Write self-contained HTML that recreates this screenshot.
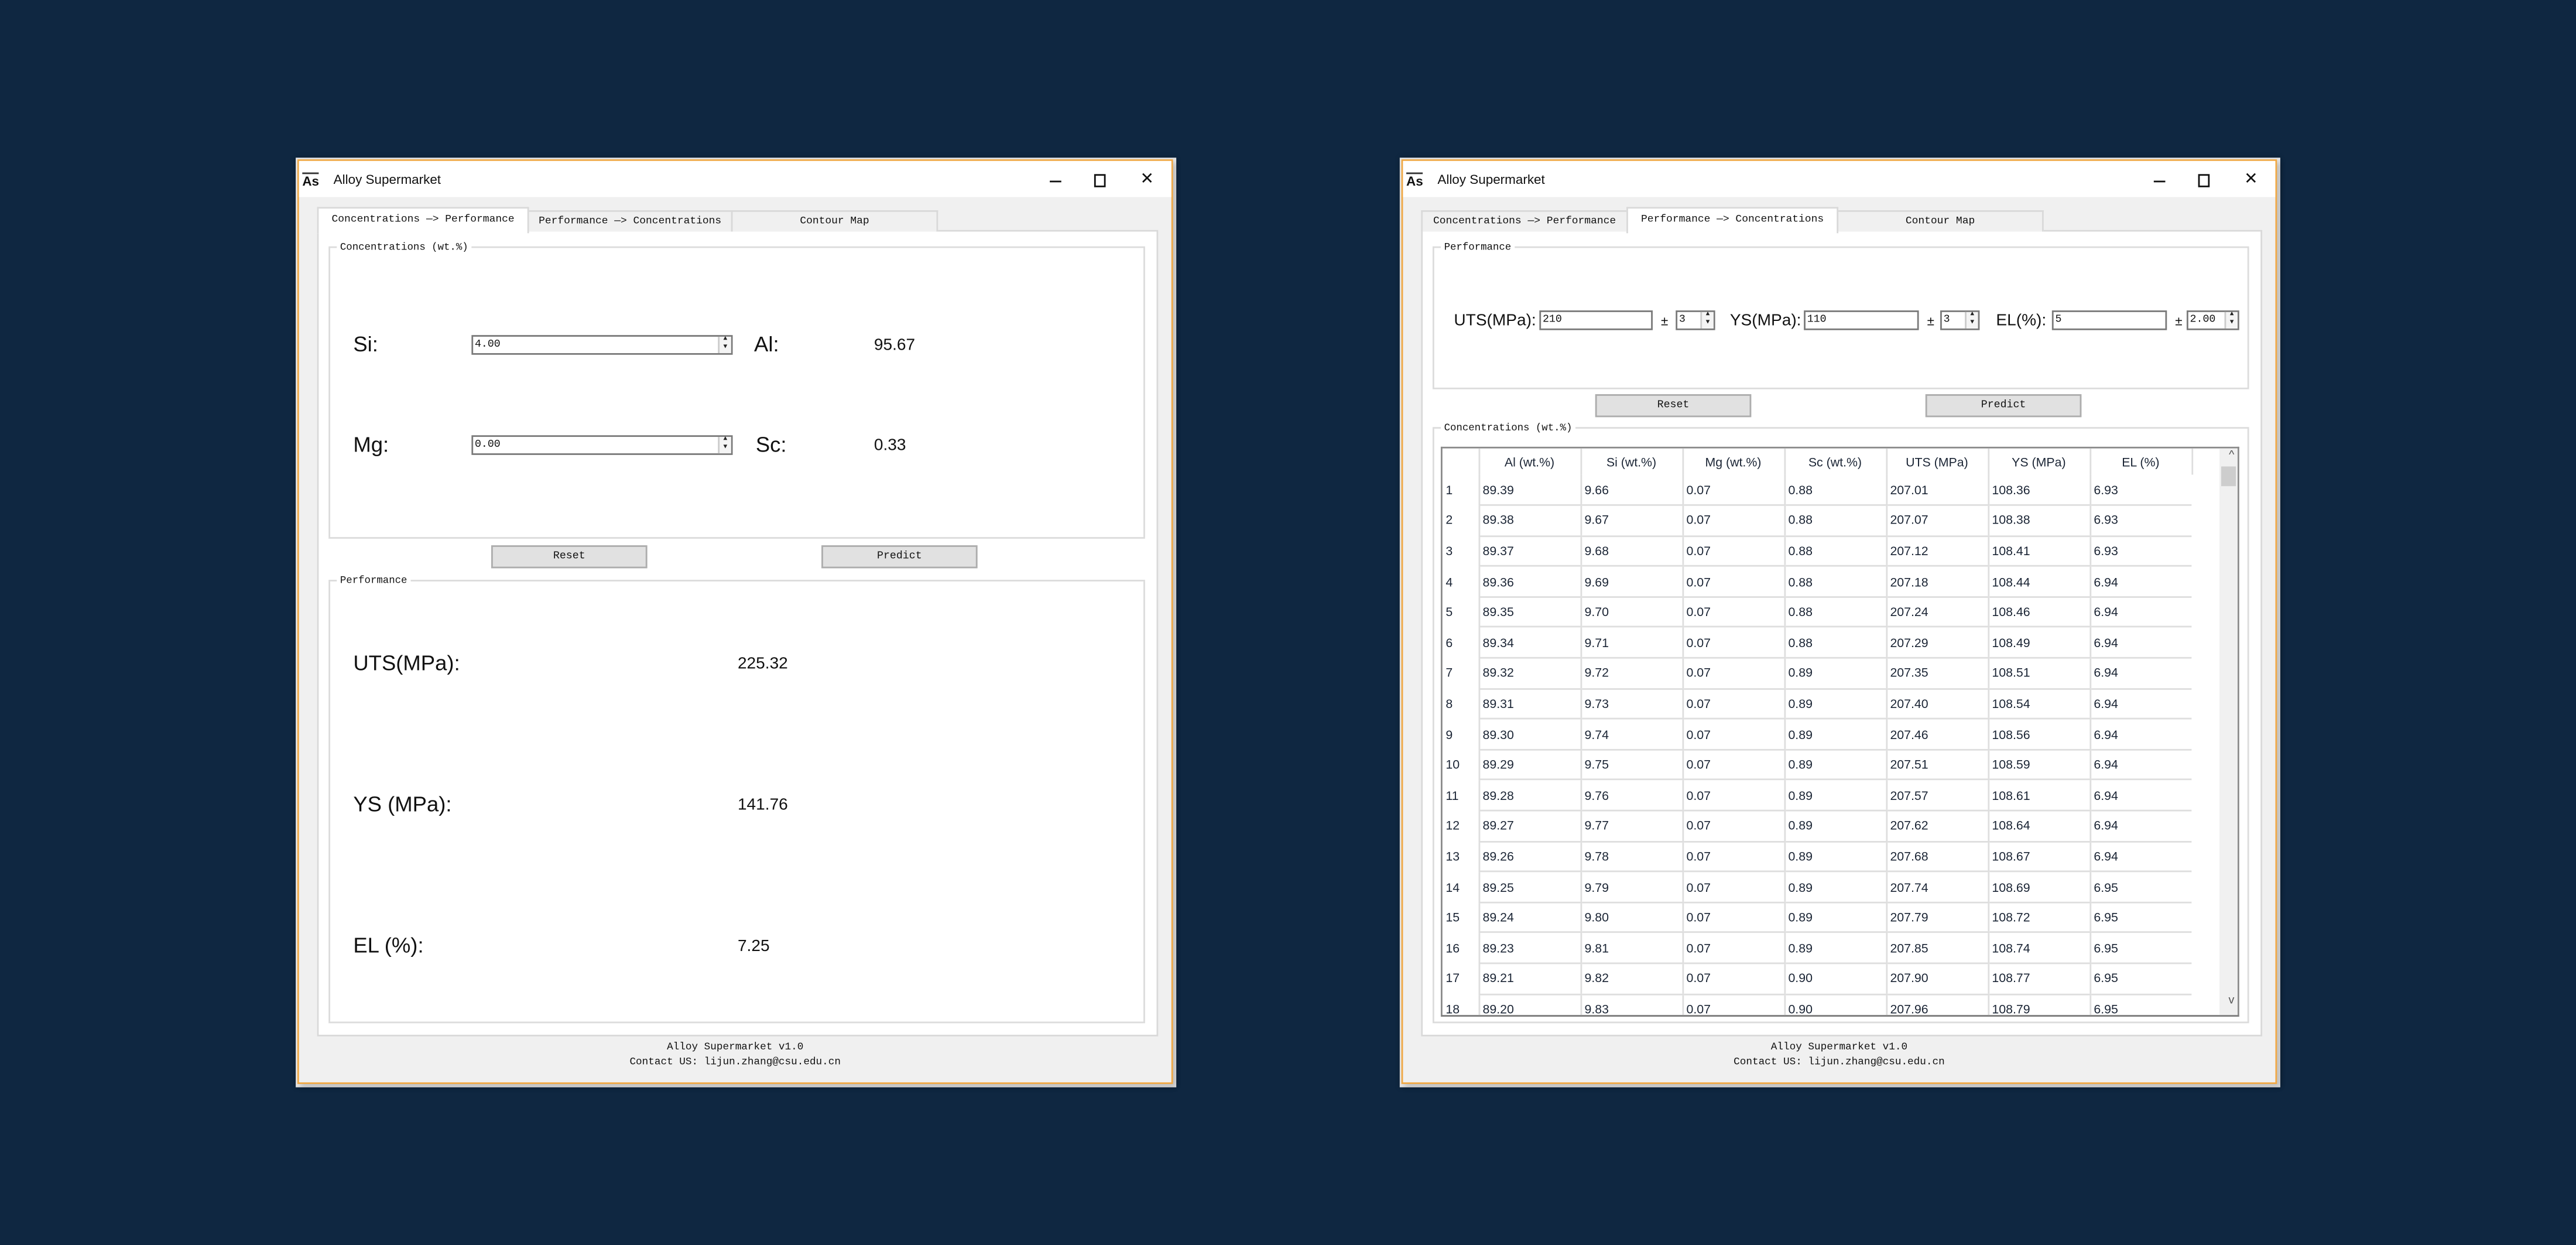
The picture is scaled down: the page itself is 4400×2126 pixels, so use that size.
<!DOCTYPE html>
<html><head><meta charset="utf-8">
<style>
*{box-sizing:border-box;margin:0;padding:0}
html,body{width:4400px;height:2126px;overflow:hidden;background:#0f2741}
#s{position:absolute;left:0;top:0;width:1568px;height:758px;transform:scale(2.80612,2.8047);transform-origin:0 0;background:#0f2741}
.a{position:absolute}
.win{position:absolute;width:536px;height:566px;background:#e4e4e4;box-shadow:0 0 3px rgba(0,0,0,.3)}
.ob{position:absolute;left:1px;top:1px;width:533px;height:563px;border:1px solid #f0a844;background:#f0f0f0;box-shadow:2px 2px 3px rgba(0,0,0,.18)}
.tb{position:absolute;left:0;top:0;width:531px;height:22px;background:#fff}
.mono{font-family:"Liberation Mono","Noto Sans CJK SC",monospace;color:#111}
.sans{font-family:"Liberation Sans",sans-serif;color:#111}
.tab{position:absolute;top:30px;height:13px;background:#f0f0f0;border:1px solid #d9d9d9;border-bottom:none;font-size:6.4px;text-align:center;line-height:12px}
.tab.on{top:28px;height:16px;background:#fff;line-height:13px;z-index:2}
.pane{position:absolute;left:11px;top:42px;width:512px;height:491px;background:#fff;border:1px solid #d9d9d9}
.grp{position:absolute;border:1px solid #dcdcdc;background:#fff}
.gt{position:absolute;top:-5px;left:4px;background:#fff;padding:0 2px;font-size:6.2px;line-height:9px}
.lbl{position:absolute;font-size:13px;line-height:14px}
.val{position:absolute;font-size:10px;line-height:12px}
.spin{position:absolute;height:12px;border:1px solid #7a7a7a;background:#fff;font-size:6.5px;line-height:10px;padding-left:1px}
.spin .ar{position:absolute;right:0;top:0;width:8px;height:10px;border-left:1px solid #ccc;background:#f4f4f4;font-size:4px;line-height:5px;text-align:center;color:#222}
.inp{position:absolute;height:12px;border:1px solid #7a7a7a;background:#fff;font-size:6.5px;line-height:10px;padding-left:1px}
.btn{position:absolute;width:95px;height:14px;background:#e1e1e1;border:1px solid #adadad;font-size:6.5px;line-height:12px;text-align:center}
.ft{position:absolute;left:0;width:531px;text-align:center;font-size:6.3px;line-height:9px}
.pm{position:absolute;font-size:8px;line-height:10px}
table{border-collapse:collapse;table-layout:fixed;font-family:"Liberation Sans",sans-serif;font-size:7.6px;color:#1b2535}
td{height:18.6px;padding-left:2px;white-space:nowrap;overflow:hidden}
td.i{width:22px;padding-left:2px}
td.d{width:62px;border-left:1px solid #dedede;border-bottom:1.5px solid #dedede;vertical-align:middle}
tr.h td{height:16px;text-align:center;border-bottom:none;padding-left:0}
</style></head><body><div id="s">

<!-- LEFT WINDOW -->
<div class="win" style="left:180px;top:96px">
 <div class="ob">
  <div class="tb">
   <div class="a sans" style="left:2px;top:7px;font-size:8px;font-weight:bold;line-height:9px;border-top:1px solid #333">As</div>
   <div class="a sans" style="left:21px;top:7px;font-size:8px;line-height:10px">Alloy Supermarket</div>
   <div class="a" style="left:457px;top:12px;width:7px;height:1px;background:#111"></div>
   <div class="a" style="left:484px;top:8px;width:7px;height:8px;border:1px solid #111"></div>
   <div class="a sans" style="left:512px;top:6px;font-size:10px;line-height:11px">✕</div>
  </div>
  <div class="pane"></div>
  <div class="tab on mono" style="left:11px;width:129px">Concentrations —&gt; Performance</div>
  <div class="tab mono" style="left:139px;width:125px">Performance —&gt; Concentrations</div>
  <div class="tab mono" style="left:263px;width:126px">Contour Map</div>

  <div class="grp" style="left:18px;top:52px;width:497px;height:178px"><div class="gt mono">Concentrations (wt.%)</div></div>
  <div class="lbl sans" style="left:33px;top:105px">Si:</div>
  <div class="spin mono" style="left:105px;top:106px;width:159px">4.00<div class="ar">▲<br>▼</div></div>
  <div class="lbl sans" style="left:277px;top:105px">Al:</div>
  <div class="val sans" style="left:350px;top:107px">95.67</div>
  <div class="lbl sans" style="left:33px;top:166px">Mg:</div>
  <div class="spin mono" style="left:105px;top:167px;width:159px">0.00<div class="ar">▲<br>▼</div></div>
  <div class="lbl sans" style="left:278px;top:166px">Sc:</div>
  <div class="val sans" style="left:350px;top:168px">0.33</div>

  <div class="btn mono" style="left:117px;top:234px">Reset</div>
  <div class="btn mono" style="left:318px;top:234px">Predict</div>

  <div class="grp" style="left:18px;top:255px;width:497px;height:270px"><div class="gt mono">Performance</div></div>
  <div class="lbl sans" style="left:33px;top:299px">UTS(MPa):</div>
  <div class="val sans" style="left:267px;top:301px">225.32</div>
  <div class="lbl sans" style="left:33px;top:385px">YS (MPa):</div>
  <div class="val sans" style="left:267px;top:387px">141.76</div>
  <div class="lbl sans" style="left:33px;top:471px">EL (%):</div>
  <div class="val sans" style="left:267px;top:473px">7.25</div>

  <div class="ft mono" style="top:535px">Alloy Supermarket v1.0</div>
  <div class="ft mono" style="top:544px">Contact US: lijun.zhang@csu.edu.cn</div>
 </div>
</div>

<!-- RIGHT WINDOW -->
<div class="win" style="left:852px;top:96px">
 <div class="ob">
  <div class="tb">
   <div class="a sans" style="left:2px;top:7px;font-size:8px;font-weight:bold;line-height:9px;border-top:1px solid #333">As</div>
   <div class="a sans" style="left:21px;top:7px;font-size:8px;line-height:10px">Alloy Supermarket</div>
   <div class="a" style="left:457px;top:12px;width:7px;height:1px;background:#111"></div>
   <div class="a" style="left:484px;top:8px;width:7px;height:8px;border:1px solid #111"></div>
   <div class="a sans" style="left:512px;top:6px;font-size:10px;line-height:11px">✕</div>
  </div>
  <div class="pane"></div>
  <div class="tab mono" style="left:11px;width:126px">Concentrations —&gt; Performance</div>
  <div class="tab on mono" style="left:136px;width:129px">Performance —&gt; Concentrations</div>
  <div class="tab mono" style="left:264px;width:126px">Contour Map</div>

  <div class="grp" style="left:18px;top:52px;width:497px;height:87px"><div class="gt mono">Performance</div></div>
  <div class="sans a" style="left:31px;top:92px;font-size:10px;line-height:12px">UTS(MPa):</div>
  <div class="inp mono" style="left:83px;top:91px;width:69px">210</div>
  <div class="pm sans" style="left:157px;top:93px">±</div>
  <div class="spin mono" style="left:166px;top:91px;width:24px">3<div class="ar">▲<br>▼</div></div>
  <div class="sans a" style="left:199px;top:92px;font-size:10px;line-height:12px">YS(MPa):</div>
  <div class="inp mono" style="left:244px;top:91px;width:70px">110</div>
  <div class="pm sans" style="left:319px;top:93px">±</div>
  <div class="spin mono" style="left:327px;top:91px;width:24px">3<div class="ar">▲<br>▼</div></div>
  <div class="sans a" style="left:361px;top:92px;font-size:10px;line-height:12px">EL(%):</div>
  <div class="inp mono" style="left:395px;top:91px;width:70px">5</div>
  <div class="pm sans" style="left:470px;top:93px">±</div>
  <div class="spin mono" style="left:477px;top:91px;width:32px">2.00<div class="ar">▲<br>▼</div></div>

  <div class="btn mono" style="left:117px;top:142px">Reset</div>
  <div class="btn mono" style="left:318px;top:142px">Predict</div>

  <div class="grp" style="left:18px;top:162px;width:497px;height:363px"><div class="gt mono">Concentrations (wt.%)</div></div>
  <div class="a" style="left:23px;top:174px;width:486px;height:347px;border:1px solid #8a8a8a;border-bottom:1.5px solid #777;background:#fff;overflow:hidden">
   <table>
    <tr class="h"><td class="i"></td><td class="d" style="border-bottom:none">Al (wt.%)</td><td class="d" style="border-bottom:none">Si (wt.%)</td><td class="d" style="border-bottom:none">Mg (wt.%)</td><td class="d" style="border-bottom:none">Sc (wt.%)</td><td class="d" style="border-bottom:none">UTS (MPa)</td><td class="d" style="border-bottom:none">YS (MPa)</td><td class="d" style="border-bottom:none;border-right:1px solid #dedede">EL (%)</td></tr>
    <tr><td class="i">1</td><td class="d">89.39</td><td class="d">9.66</td><td class="d">0.07</td><td class="d">0.88</td><td class="d">207.01</td><td class="d">108.36</td><td class="d">6.93</td></tr>
    <tr><td class="i">2</td><td class="d">89.38</td><td class="d">9.67</td><td class="d">0.07</td><td class="d">0.88</td><td class="d">207.07</td><td class="d">108.38</td><td class="d">6.93</td></tr>
    <tr><td class="i">3</td><td class="d">89.37</td><td class="d">9.68</td><td class="d">0.07</td><td class="d">0.88</td><td class="d">207.12</td><td class="d">108.41</td><td class="d">6.93</td></tr>
    <tr><td class="i">4</td><td class="d">89.36</td><td class="d">9.69</td><td class="d">0.07</td><td class="d">0.88</td><td class="d">207.18</td><td class="d">108.44</td><td class="d">6.94</td></tr>
    <tr><td class="i">5</td><td class="d">89.35</td><td class="d">9.70</td><td class="d">0.07</td><td class="d">0.88</td><td class="d">207.24</td><td class="d">108.46</td><td class="d">6.94</td></tr>
    <tr><td class="i">6</td><td class="d">89.34</td><td class="d">9.71</td><td class="d">0.07</td><td class="d">0.88</td><td class="d">207.29</td><td class="d">108.49</td><td class="d">6.94</td></tr>
    <tr><td class="i">7</td><td class="d">89.32</td><td class="d">9.72</td><td class="d">0.07</td><td class="d">0.89</td><td class="d">207.35</td><td class="d">108.51</td><td class="d">6.94</td></tr>
    <tr><td class="i">8</td><td class="d">89.31</td><td class="d">9.73</td><td class="d">0.07</td><td class="d">0.89</td><td class="d">207.40</td><td class="d">108.54</td><td class="d">6.94</td></tr>
    <tr><td class="i">9</td><td class="d">89.30</td><td class="d">9.74</td><td class="d">0.07</td><td class="d">0.89</td><td class="d">207.46</td><td class="d">108.56</td><td class="d">6.94</td></tr>
    <tr><td class="i">10</td><td class="d">89.29</td><td class="d">9.75</td><td class="d">0.07</td><td class="d">0.89</td><td class="d">207.51</td><td class="d">108.59</td><td class="d">6.94</td></tr>
    <tr><td class="i">11</td><td class="d">89.28</td><td class="d">9.76</td><td class="d">0.07</td><td class="d">0.89</td><td class="d">207.57</td><td class="d">108.61</td><td class="d">6.94</td></tr>
    <tr><td class="i">12</td><td class="d">89.27</td><td class="d">9.77</td><td class="d">0.07</td><td class="d">0.89</td><td class="d">207.62</td><td class="d">108.64</td><td class="d">6.94</td></tr>
    <tr><td class="i">13</td><td class="d">89.26</td><td class="d">9.78</td><td class="d">0.07</td><td class="d">0.89</td><td class="d">207.68</td><td class="d">108.67</td><td class="d">6.94</td></tr>
    <tr><td class="i">14</td><td class="d">89.25</td><td class="d">9.79</td><td class="d">0.07</td><td class="d">0.89</td><td class="d">207.74</td><td class="d">108.69</td><td class="d">6.95</td></tr>
    <tr><td class="i">15</td><td class="d">89.24</td><td class="d">9.80</td><td class="d">0.07</td><td class="d">0.89</td><td class="d">207.79</td><td class="d">108.72</td><td class="d">6.95</td></tr>
    <tr><td class="i">16</td><td class="d">89.23</td><td class="d">9.81</td><td class="d">0.07</td><td class="d">0.89</td><td class="d">207.85</td><td class="d">108.74</td><td class="d">6.95</td></tr>
    <tr><td class="i">17</td><td class="d">89.21</td><td class="d">9.82</td><td class="d">0.07</td><td class="d">0.90</td><td class="d">207.90</td><td class="d">108.77</td><td class="d">6.95</td></tr>
    <tr><td class="i">18</td><td class="d">89.20</td><td class="d">9.83</td><td class="d">0.07</td><td class="d">0.90</td><td class="d">207.96</td><td class="d">108.79</td><td class="d">6.95</td></tr>
   </table>
   <div class="a" style="right:0;top:0;width:11px;height:345px;background:#f0f0f0"></div>
   <div class="a sans" style="right:2px;top:1px;font-size:7px;color:#555;line-height:8px">^</div>
   <div class="a" style="right:1px;top:11px;width:9px;height:12px;background:#cdcdcd"></div>
   <div class="a sans" style="right:2px;top:333px;font-size:7px;color:#555;line-height:8px">v</div>
  </div>

  <div class="ft mono" style="top:535px">Alloy Supermarket v1.0</div>
  <div class="ft mono" style="top:544px">Contact US: lijun.zhang@csu.edu.cn</div>
 </div>
</div>

</div></body></html>
